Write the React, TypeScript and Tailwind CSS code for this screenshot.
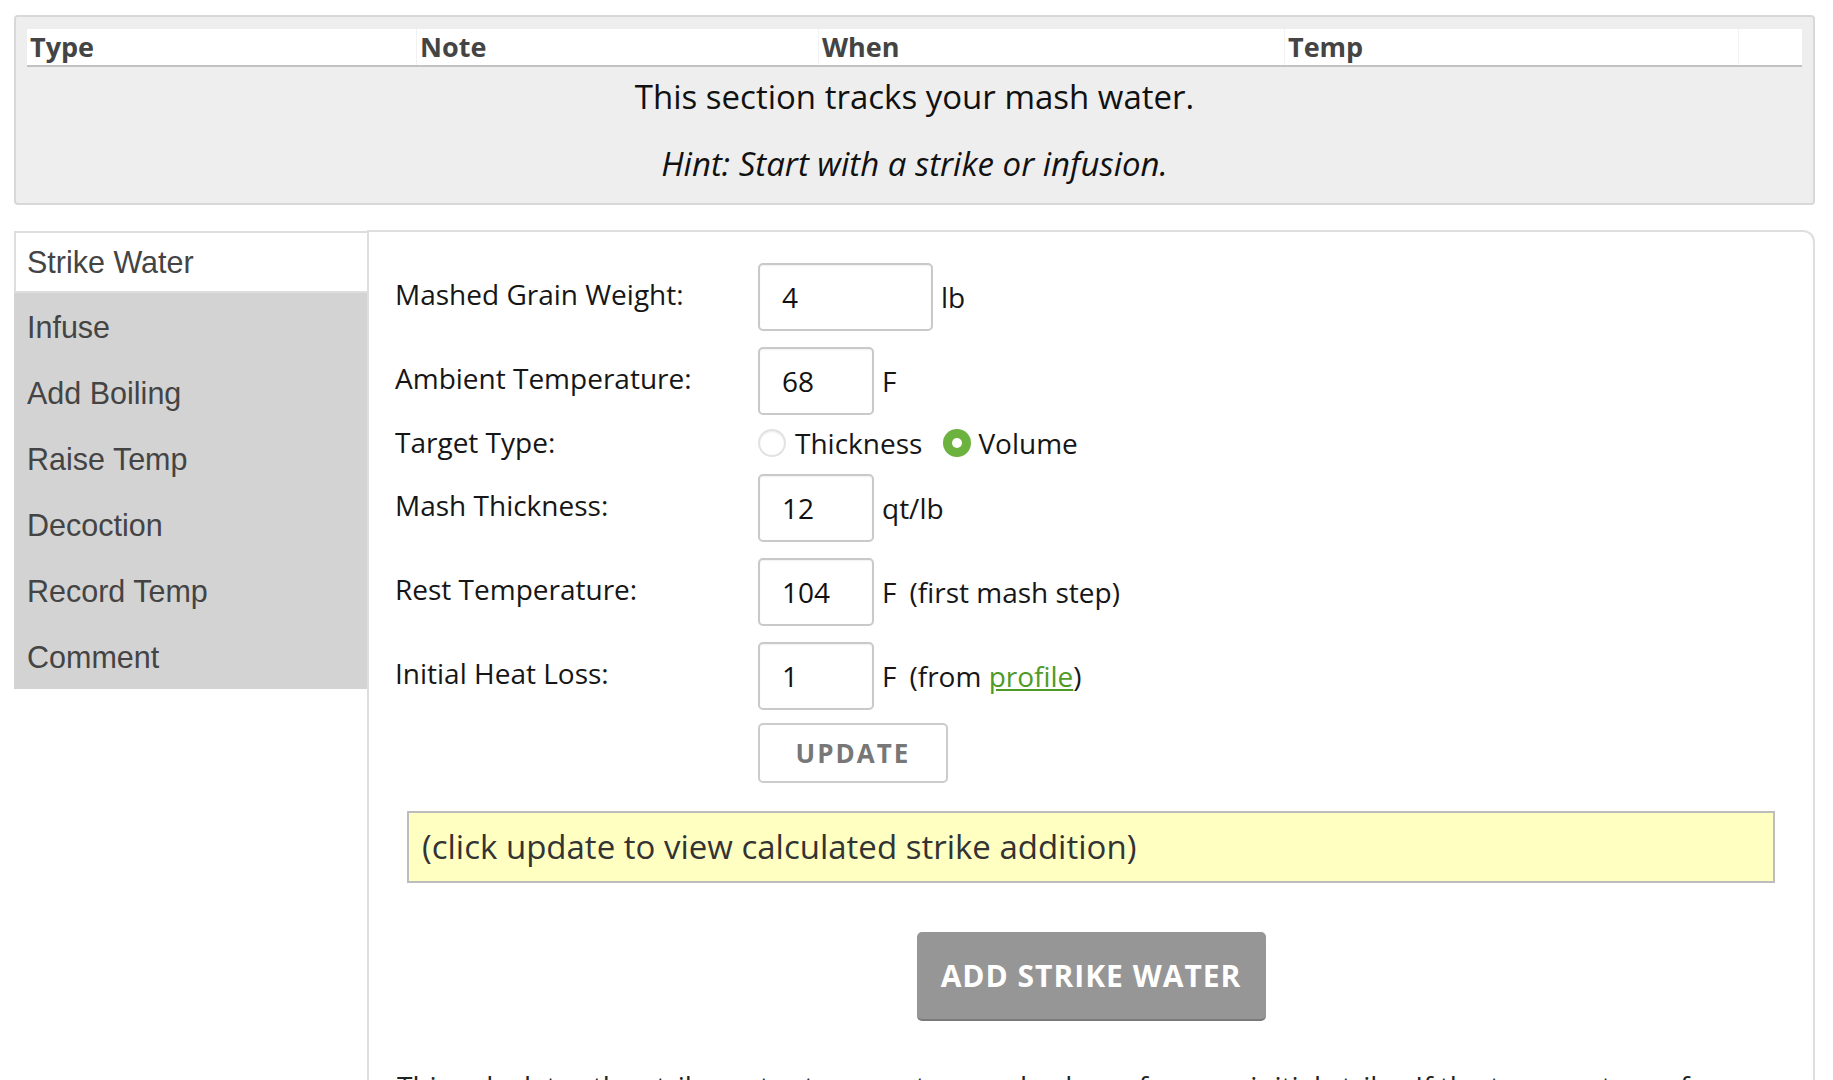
const labelCls = "w-[363px] shrink-0 text-[28px] leading-[38px] text-[#161616] -mt-[6px]";
const unitCls = "text-[28px] leading-[38px] text-[#161616]";

const Field = ({ label, value, wide, unit, extra }: { label: string; value: string; wide?: boolean; unit: string; extra?: React.ReactNode }) => (
  <div className="flex items-center">
    <div className={labelCls}>{label}</div>
    <input
      readOnly
      value={value}
      className={`h-[68px] ${wide ? "w-[175px]" : "w-[116px]"} border-2 border-[#c9c9c9] rounded-[5px] bg-white pl-[22px] text-[28px] text-[#111] outline-none shadow-[inset_0_1px_2px_rgba(0,0,0,0.06)]`}
    />
    <span className={`${unitCls} ml-[8px]`}>{unit}</span>
    {extra && <span className={`${unitCls} ml-[13px]`}>{extra}</span>}
  </div>
);

const tabs = ["Infuse", "Add Boiling", "Raise Temp", "Decoction", "Record Temp", "Comment"];

export default function App() {
  return (
    <div className="h-[1080px] overflow-hidden bg-white pl-[14px] pr-[18px] pt-[15px] font-['Open_Sans',sans-serif]">
      {/* Water log panel */}
      <div className="h-[190px] rounded-[4px] border-2 border-[#d8d8d8] bg-[#eeeeee] px-[11px] pt-[12px]">
        <div className="grid h-[38px] grid-cols-[389px_402px_466px_454px_1fr] border-b-2 border-[#c2c2c2] bg-white text-[27px] font-bold leading-[36px] text-[#444]">
          <div className="pl-[3px]">Type</div>
          <div className="border-l border-[#f2f2f2] pl-[3px]">Note</div>
          <div className="border-l border-[#f2f2f2] pl-[3px]">When</div>
          <div className="border-l border-[#f2f2f2] pl-[3px]">Temp</div>
          <div className="border-l border-[#f2f2f2]" />
        </div>
        <p className="mt-[10px] text-center text-[33px] leading-[40px] text-[#111]">This section tracks your mash water.</p>
        <p className="mt-[27px] text-center text-[33px] italic leading-[40px] text-[#111]">Hint: Start with a strike or infusion.</p>
      </div>

      <div className="mt-[25px] flex">
        {/* Sidebar tabs */}
        <div className="mt-[1px] w-[353px] shrink-0 font-['Liberation_Sans',Arial,sans-serif] text-[30.5px] text-[#444]">
          <div className="flex h-[62px] items-center border-2 border-r-0 border-[#dedede] bg-white pl-[11px] pt-[2px]">Strike Water</div>
          {tabs.map((t) => (
            <div key={t} className="flex h-[66px] items-center bg-[#d3d3d3] pl-[13px] pt-[4px]">
              {t}
            </div>
          ))}
        </div>

        {/* Strike water form */}
        <div className="h-[900px] flex-1 rounded-tr-[12px] border-2 border-b-0 border-[#dedede] pt-[31px]">
          <div className="flex flex-col pl-[26px]">
            <Field label="Mashed Grain Weight:" value="4" wide unit="lb" />
            <div className="mt-[16px]">
              <Field label="Ambient Temperature:" value="68" unit="F" />
            </div>
            <div className="mt-[16px] flex h-[27px] items-center">
              <div className={labelCls}>Target Type:</div>
              <div className="mb-[4px] flex items-center">
                <span className="h-[28px] w-[28px] rounded-full border-2 border-[#e2e2e2] bg-white shadow-[inset_0_1px_2px_rgba(0,0,0,0.08)]" />
                <span className={`${unitCls} ml-[9px]`}>Thickness</span>
                <span className="ml-[21px] flex h-[28px] w-[28px] items-center justify-center rounded-full bg-[#6bb23f]">
                  <span className="h-[10px] w-[10px] rounded-full bg-white" />
                </span>
                <span className={`${unitCls} ml-[7px]`}>Volume</span>
              </div>
            </div>
            <div className="mt-[16px]">
              <Field label="Mash Thickness:" value="12" unit="qt/lb" />
            </div>
            <div className="mt-[16px]">
              <Field label="Rest Temperature:" value="104" unit="F" extra="(first mash step)" />
            </div>
            <div className="mt-[16px]">
              <Field
                label="Initial Heat Loss:"
                value="1"
                unit="F"
                extra={
                  <>
                    (from <a className="text-[#4f9a27] underline">profile</a>)
                  </>
                }
              />
            </div>
            <div className="mt-[13px] pl-[363px]">
              <button className="h-[60px] w-[190px] rounded-[5px] border-2 border-[#cccccc] bg-white text-[26px] font-bold tracking-[2px] text-[#777]">
                UPDATE
              </button>
            </div>
          </div>

          <div className="mx-[38px] mt-[28px] flex h-[72px] items-center border-2 border-[#bdbdbd] bg-[#ffffc2] pl-[13px] text-[33px] text-[#333]">
            (click update to view calculated strike addition)
          </div>

          <div className="mt-[49px] flex justify-center">
            <button className="h-[89px] w-[349px] rounded-[5px] border-b-2 border-[#7a7a7a] bg-[#969696] text-[30px] font-bold tracking-[1px] text-white">
              ADD STRIKE WATER
            </button>
          </div>

          <p className="mt-[44px] pl-[28px] text-[28px] leading-[42px] text-[#222]">
            This calculates the strike water temperature and volume for your initial strike. If the temperature of your mash tun differs from ambient, adjust the heat loss.
          </p>
        </div>
      </div>
    </div>
  );
}
